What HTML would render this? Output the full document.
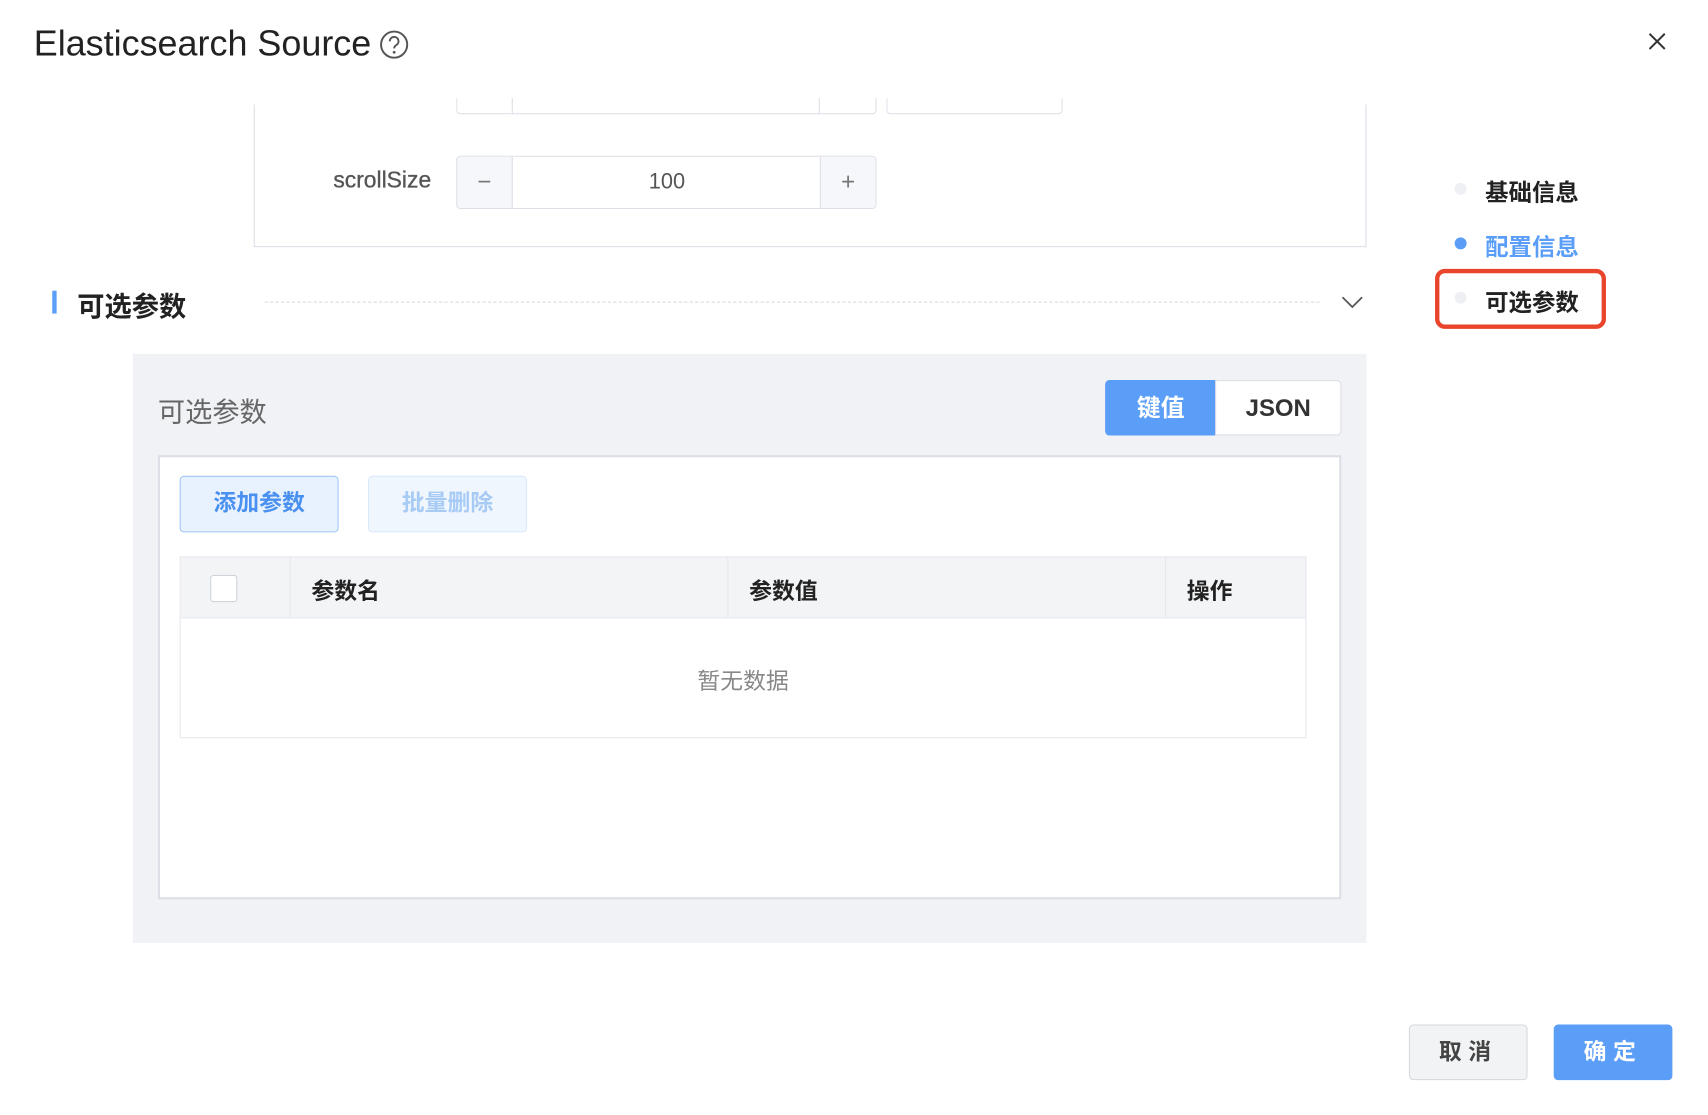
<!DOCTYPE html>
<html><head><meta charset="utf-8"><style>
*{box-sizing:border-box;margin:0;padding:0}
body{width:1708px;height:1114px;overflow:hidden;background:#fff;font-family:"Liberation Sans","Noto Sans CJK SC",sans-serif}
#s{position:absolute;left:0;top:0;width:1570px;height:1024px;transform:scale(1.0888);transform-origin:0 0}
.a{position:absolute}
.cn{font-family:"Liberation Sans","Noto Sans CJK SC",sans-serif}
</style></head><body><div id="s">
<div class="a" style="left:31px;top:21px;font-size:33px;color:#222;">Elasticsearch Source</div>
<svg class="a" style="left:348px;top:27px" width="28" height="28" viewBox="0 0 28 28"><circle cx="14" cy="14" r="12" fill="none" stroke="#555" stroke-width="1.8"/><path d="M10 11a4 4 0 1 1 6 3.4c-1.3.8-2 1.4-2 3" fill="none" stroke="#555" stroke-width="1.8"/><circle cx="14" cy="21" r="1.3" fill="#555"/></svg>
<svg class="a" style="left:1513px;top:29px" width="18" height="18" viewBox="0 0 18 18"><path d="M2 2L16 16M16 2L2 16" stroke="#333" stroke-width="1.8"/></svg>

<div class="a" style="left:233px;top:96px;width:1022px;height:131px;border:1px solid #dcdfe6;border-top:none"></div>
<div class="a" style="left:419px;top:90px;width:386px;height:15px;border:1px solid #dcdfe6;border-top:none;border-radius:0 0 4px 4px"></div>
<div class="a" style="left:470px;top:90px;width:283px;height:15px;border-left:1px solid #dcdfe6;border-right:1px solid #dcdfe6"></div>
<div class="a" style="left:814px;top:90px;width:162px;height:15px;border:1px solid #dcdfe6;border-top:none;border-radius:0 0 4px 4px"></div>
<div class="a" style="left:230px;top:154px;width:166px;text-align:right;font-size:21px;color:#555;-webkit-text-stroke:0.3px #555">scrollSize</div>
<div class="a" style="left:419px;top:143px;width:386px;height:49px;border:1px solid #dcdfe6;border-radius:4px;overflow:hidden;background:#fff">
 <div class="a" style="left:0;top:0;width:51px;height:47px;background:#f5f7fa;border-right:1px solid #dcdfe6;text-align:center;line-height:46px;font-size:22px;color:#777">−</div>
 <div class="a" style="left:51px;top:0;width:283px;height:47px;text-align:center;line-height:47px;font-size:20px;color:#555">100</div>
 <div class="a" style="right:0;top:0;width:51px;height:47px;background:#f5f7fa;border-left:1px solid #dcdfe6;text-align:center;line-height:46px;font-size:22px;color:#777">+</div>
</div>

<div class="a" style="left:48px;top:267px;width:4px;height:21px;background:#5b9ef8"></div>
<div class="a cn" style="left:71px;top:262px;font-size:25px;font-weight:bold;color:#222">可选参数</div>
<div class="a" style="left:243px;top:277px;width:969px;border-top:1px dashed #d8d8d8"></div>
<svg class="a" style="left:1231px;top:270px" width="22" height="14" viewBox="0 0 22 14"><path d="M2 3l9 9 9-9" fill="none" stroke="#555" stroke-width="1.6"/></svg>

<div class="a" style="left:122px;top:325px;width:1133px;height:541px;background:#f0f2f6"></div>
<div class="a cn" style="left:145px;top:359px;font-size:25px;color:#666">可选参数</div>
<div class="a cn" style="left:1015px;top:349px;width:102px;height:51px;background:#5b9ef8;border-radius:4px 0 0 4px;color:#fff;font-size:22px;text-align:center;line-height:51px;font-weight:bold">键值</div>
<div class="a" style="left:1116px;top:349px;width:116px;height:51px;background:#fff;border:1px solid #dcdfe6;border-radius:0 4px 4px 0;color:#333;font-size:22px;text-align:center;line-height:49px;font-weight:bold">JSON</div>
<div class="a" style="left:145px;top:418px;width:1087px;height:408px;background:#fff;border:2px solid #dcdfe6"></div>
<div class="a cn" style="left:165px;top:437px;width:146px;height:52px;background:#e8f2fe;border:1px solid #a0c8f8;border-radius:4px;color:#4a90f0;font-size:21px;text-align:center;line-height:50px;font-weight:bold">添加参数</div>
<div class="a cn" style="left:338px;top:437px;width:146px;height:52px;background:#f0f6fe;border:1px solid #d8e8fb;border-radius:4px;color:#a8cbf5;font-size:21px;text-align:center;line-height:50px;font-weight:bold">批量删除</div>
<div class="a" style="left:165px;top:511px;width:1035px;height:167px;border:1px solid #e4e7ed"></div>
<div class="a" style="left:166px;top:512px;width:1033px;height:56px;background:#f3f4f6;border-bottom:1px solid #e4e7ed"></div>
<div class="a" style="left:266px;top:512px;height:56px;border-left:1px solid #e4e7ed"></div>
<div class="a" style="left:668px;top:512px;height:56px;border-left:1px solid #e4e7ed"></div>
<div class="a" style="left:1070px;top:512px;height:56px;border-left:1px solid #e4e7ed"></div>
<div class="a" style="left:193px;top:528px;width:25px;height:25px;border:1px solid #cfd4dc;border-radius:3px;background:#fff"></div>
<div class="a cn" style="left:286px;top:527px;font-size:21px;font-weight:bold;color:#222">参数名</div>
<div class="a cn" style="left:688px;top:527px;font-size:21px;font-weight:bold;color:#222">参数值</div>
<div class="a cn" style="left:1090px;top:527px;font-size:21px;font-weight:bold;color:#222">操作</div>
<div class="a cn" style="left:166px;top:610px;width:1033px;text-align:center;font-size:21px;color:#888">暂无数据</div>

<div class="a" style="left:1336px;top:168px;width:11px;height:11px;border-radius:50%;background:#eef0f3"></div>
<div class="a" style="left:1336px;top:218px;width:11px;height:11px;border-radius:50%;background:#5b9ef8"></div>
<div class="a" style="left:1336px;top:268px;width:11px;height:11px;border-radius:50%;background:#eef0f3"></div>
<div class="a cn" style="left:1364px;top:160px;font-size:21.5px;font-weight:bold;color:#222">基础信息</div>
<div class="a cn" style="left:1364px;top:210px;font-size:21.5px;font-weight:bold;color:#5b9ef8">配置信息</div>
<div class="a cn" style="left:1364px;top:261px;font-size:21.5px;font-weight:bold;color:#222">可选参数</div>
<div class="a" style="left:1318px;top:247px;width:157px;height:55px;border:4px solid #e8452c;border-radius:9px"></div>

<div class="a cn" style="left:1294px;top:941px;width:109px;height:51px;background:#f2f3f5;border:1px solid #d8dade;border-radius:4px;color:#444;font-size:21px;text-align:center;line-height:49px;font-weight:bold;letter-spacing:6px">取消</div>
<div class="a cn" style="left:1427px;top:941px;width:109px;height:51px;background:#5b9ef8;border-radius:4px;color:#fff;font-size:21px;text-align:center;line-height:51px;font-weight:bold;letter-spacing:6px">确定</div>
</div></body></html>
